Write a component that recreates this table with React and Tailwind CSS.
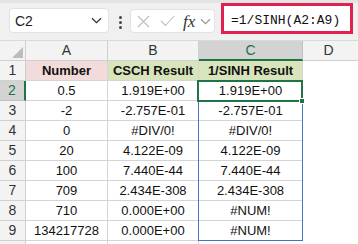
import React from "react";

const rows = [
  ["0.5", "1.919E+00", "1.919E+00"],
  ["-2", "-2.757E-01", "-2.757E-01"],
  ["0", "#DIV/0!", "#DIV/0!"],
  ["20", "4.122E-09", "4.122E-09"],
  ["100", "7.440E-44", "7.440E-44"],
  ["709", "2.434E-308", "2.434E-308"],
  ["710", "0.000E+00", "#NUM!"],
  ["134217728", "0.000E+00", "#NUM!"],
];

const Chevron = ({ color = "#444" }) => (
  <svg width="11" height="7" viewBox="0 0 11 7" fill="none">
    <path d="M1 1.2 L5.5 5.6 L10 1.2" stroke={color} strokeWidth="1.3" />
  </svg>
);

export default function App() {
  const font = { fontFamily: '"Liberation Sans", Arial, sans-serif' };
  return (
    <div className="w-[358px] h-[244px] overflow-hidden bg-white" style={font}>
      {/* toolbar */}
      <div className="h-[41px] bg-[#f0f0f0] border-t-[3px] border-t-[#e4e4e4] border-b border-b-[#d9d9d9] flex items-start">
        <div className="ml-[9px] mt-[5px] w-[100px] h-[25px] rounded-[4px] bg-white border border-[#e2e2e2] flex items-center pl-[5px] pr-[6px] justify-between">
          <span className="text-[14px] text-[#222] pt-[2px]">C2</span>
          <Chevron color="#333" />
        </div>
        <div className="ml-[10px] mt-[13px] flex flex-col gap-[2px]">
          <div className="w-[3px] h-[3px] bg-[#444] rounded-full" />
          <div className="w-[3px] h-[3px] bg-[#444] rounded-full" />
          <div className="w-[3px] h-[3px] bg-[#444] rounded-full" />
        </div>
        <div className="ml-[8px] mt-[6px] w-[85px] h-[24px] rounded-[4px] bg-white border border-[#e2e2e2] flex items-center pl-[6px]">
          <svg width="13" height="13" viewBox="0 0 13 13" fill="none">
            <path d="M1 1 L12 12 M12 1 L1 12" stroke="#bfbfbf" strokeWidth="1.1" />
          </svg>
          <svg className="ml-[10px]" width="15" height="12" viewBox="0 0 15 12" fill="none">
            <path d="M1 6 L5.5 10.5 L14 1" stroke="#bfbfbf" strokeWidth="1.1" />
          </svg>
          <span
            className="ml-[8px] text-[17px] italic text-[#333] leading-none"
            style={{ fontFamily: '"Liberation Serif", "Times New Roman", serif' }}
          >
            fx
          </span>
          <span className="ml-[5px]">
            <Chevron color="#9a9a9a" />
          </span>
        </div>
        <div className="ml-[6px] mt-0 w-[132px] h-[31px] bg-white border-[3px] border-[#e0204f] flex items-center pl-[7px] pt-[4px]">
          <span
            className="text-[13px] text-[#111]"
            style={{ fontFamily: '"Liberation Mono", "Courier New", monospace' }}
          >
            =1/SINH(A2:A9)
          </span>
        </div>
      </div>

      {/* grid */}
      <div className="relative">
        <div className="grid grid-cols-[26px_82px_91px_104px_1fr] grid-rows-[repeat(10,20px)_4px]">
          {/* header row */}
          <div className="bg-[#f3f3f3] border-r border-b border-[#d0d0d0] relative">
            <div
              className="absolute right-[2px] bottom-[2px] w-[11px] h-[11px] bg-[#bcbcbc]"
              style={{ clipPath: "polygon(100% 0, 100% 100%, 0 100%)" }}
            />
          </div>
          <div className="bg-[#f3f3f3] border-r border-b border-[#d0d0d0] flex items-center justify-center text-[14px] text-[#333]">A</div>
          <div className="bg-[#f3f3f3] border-r border-b border-[#d0d0d0] flex items-center justify-center text-[14px] text-[#333]">B</div>
          <div className="bg-[#d3d3d3] border-r border-r-[#c0c0c0] border-b-2 border-b-[#217346] flex items-center justify-center text-[14px] text-[#217346]">C</div>
          <div className="bg-[#f3f3f3] border-b border-[#d0d0d0] flex items-center justify-center text-[14px] text-[#333] pr-[4px]">D</div>

          {/* row 1 */}
          <div className="bg-[#f3f3f3] border-r border-b border-[#d0d0d0] flex items-center justify-center text-[14px] text-[#333]">1</div>
          <div className="bg-[#f2dcdb] border-r border-b border-[#d4d4d4] flex items-center justify-center text-[13px] font-bold text-[#111]">Number</div>
          <div className="bg-[#d8e4bc] border-r border-b border-[#d4d4d4] flex items-center justify-center text-[13px] font-bold text-[#111]">CSCH Result</div>
          <div className="bg-[#d8e4bc] border-r border-b border-[#d4d4d4] flex items-center justify-center text-[13px] font-bold text-[#111]">1/SINH Result</div>
          <div className="bg-white" />

          {rows.map((r, i) => {
            const n = i + 2;
            const sel = n === 2;
            return (
              <React.Fragment key={n}>
                <div
                  className={
                    sel
                      ? "bg-[#d3d3d3] border-r-2 border-r-[#217346] border-b border-b-[#c0c0c0] flex items-center justify-center text-[14px] text-[#217346]"
                      : "bg-[#f3f3f3] border-r border-b border-[#d0d0d0] flex items-center justify-center text-[14px] text-[#333]"
                  }
                >
                  {n}
                </div>
                <div className="border-r border-b border-[#d4d4d4] flex items-center justify-center text-[13px] text-[#111]">{r[0]}</div>
                <div className="border-r border-b border-[#d4d4d4] flex items-center justify-center text-[13px] text-[#111]">{r[1]}</div>
                <div className="border-r border-b border-[#d4d4d4] flex items-center justify-center text-[13px] text-[#111]">{r[2]}</div>
                <div className="bg-white" />
              </React.Fragment>
            );
          })}

          {/* partial row 10 */}
          <div className="bg-[#f3f3f3] border-r border-[#d0d0d0]" />
          <div className="border-r border-[#d4d4d4]" />
          <div className="border-r border-[#d4d4d4]" />
          <div />
          <div />
        </div>

        {/* blue range outline C2:C9 */}
        <div className="absolute left-[198px] top-[39px] w-[105px] h-[161px] border border-[#4472c4] pointer-events-none" />
        {/* active cell C2 */}
        <div className="absolute left-[197px] top-[39px] w-[106px] h-[22px] border-2 border-[#217346] pointer-events-none" />
        <div className="absolute left-[299px] top-[57px] w-[6px] h-[6px] bg-[#217346] border border-white pointer-events-none" />
      </div>
    </div>
  );
}
